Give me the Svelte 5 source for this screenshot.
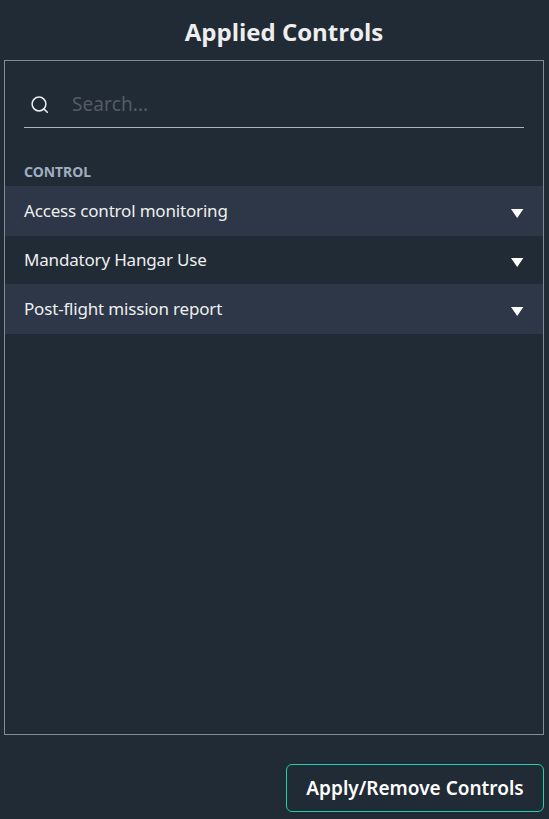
<script lang="ts">
	interface Control {
		id: number;
		name: string;
	}

	let controls = $state<Control[]>([
		{ id: 1, name: 'Access control monitoring' },
		{ id: 2, name: 'Mandatory Hangar Use' },
		{ id: 3, name: 'Post-flight mission report' }
	]);

	let search = $state('');

	const filtered = $derived(
		controls.filter((c) => c.name.toLowerCase().includes(search.toLowerCase()))
	);
</script>

<section class="applied-controls">
	<h2 class="title">Applied Controls</h2>

	<div class="panel">
		<!-- Search -->
		<label class="search">
			<svg class="search-icon" viewBox="0 0 18 18" fill="none" stroke="currentColor" stroke-width="1.5">
				<circle cx="8" cy="8" r="6.9" />
				<path stroke-linecap="round" d="M12.9 12.9 16.3 16.3" />
			</svg>
			<input type="text" placeholder="Search..." bind:value={search} />
		</label>

		<!-- Control list -->
		<div class="list-header"><span>CONTROL</span></div>
		<ul class="list">
			{#each filtered as control (control.id)}
				<li class="row">
					<span>{control.name}</span>
					<svg class="arrow" viewBox="0 0 13 9" fill="currentColor">
						<path d="M0 0H12.4L6.2 9Z" />
					</svg>
				</li>
			{/each}
		</ul>
	</div>

	<button type="button" class="btn-apply">Apply/Remove Controls</button>
</section>

<style>
	:global(body) {
		background: #212b36;
	}

	.applied-controls {
		display: flex;
		flex-direction: column;
		box-sizing: border-box;
		height: 819px;
		padding: 0 5px 7px 4px;
		font-family: 'Noto Sans', 'Open Sans', sans-serif;
		color: #eeeeee;
	}

	.title {
		margin: 0;
		height: 60px;
		padding: 16px 0 0 20px;
		box-sizing: border-box;
		font-family: 'Open Sans', 'Noto Sans', sans-serif;
		font-size: 24px;
		line-height: 32px;
		font-weight: 700;
		text-align: center;
	}

	.panel {
		flex: 1;
		box-sizing: border-box;
		border: 1px solid #858b91;
	}

	.search {
		display: flex;
		align-items: center;
		box-sizing: border-box;
		height: 47px;
		margin: 20px 19px 0;
		padding-left: 7px;
		border-bottom: 1px solid #afb4b8;
	}

	.search-icon {
		flex-shrink: 0;
		width: 18px;
		height: 18px;
		margin: 2px 23px 0 0;
		color: #eeeeee;
	}

	.search input {
		flex: 1;
		min-width: 0;
		padding: 0;
		border: none;
		outline: none;
		background: transparent;
		font-family: inherit;
		font-size: 19px;
		letter-spacing: 0.1px;
		color: inherit;
	}

	.search input::placeholder {
		color: #535b66;
		opacity: 1;
	}

	.list-header {
		height: 58px;
		box-sizing: border-box;
		padding: 33px 19px 0;
		font-size: 15px;
		line-height: 20px;
		font-weight: 700;
		color: #a0aec0;
	}

	.list-header span {
		display: inline-block;
		transform: scaleX(0.93);
		transform-origin: left;
	}

	.list {
		margin: 0;
		padding: 0;
		list-style: none;
	}

	.row {
		display: flex;
		align-items: center;
		justify-content: space-between;
		box-sizing: border-box;
		height: 48px;
		padding: 0 19px;
		font-size: 17px;
		letter-spacing: -0.18px;
	}

	.row span {
		padding-bottom: 2px;
	}

	.row:nth-child(odd) {
		height: 50px;
		background: #2d3748;
	}

	.arrow {
		flex-shrink: 0;
		width: 13px;
		height: 9px;
		margin-top: 4px;
		color: #ffffff;
	}

	.btn-apply {
		align-self: flex-end;
		box-sizing: border-box;
		width: 258px;
		height: 48px;
		margin-top: 29px;
		padding: 0;
		border: 1px solid #1fd1ac;
		border-radius: 6px;
		background: transparent;
		font-family: inherit;
		font-size: 19px;
		font-weight: 600;
		color: #ffffff;
		cursor: pointer;
	}
</style>
